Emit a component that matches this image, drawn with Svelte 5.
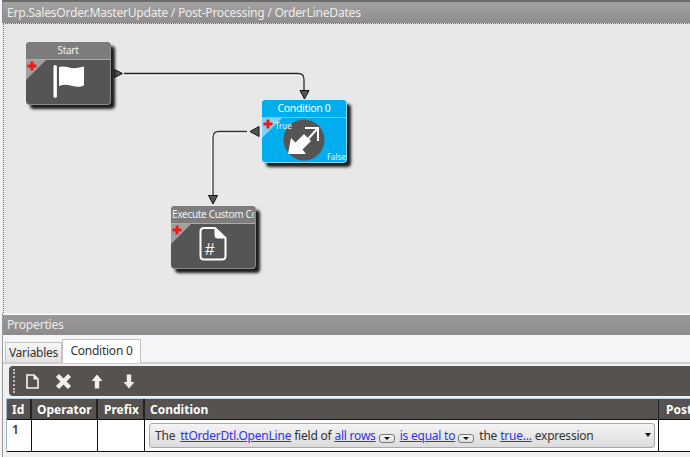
<script>
  const nodes = [
    { id: 'start', title: 'Start', x: 26, y: 19, kind: 'flag' },
    { id: 'cond', title: 'Condition 0', x: 262, y: 77, kind: 'cond' },
    { id: 'exec', title: 'Execute Custom Code', x: 171, y: 183, kind: 'code' }
  ];
  const cols = ['Id', 'Operator', 'Prefix', 'Condition', 'Post'];
</script>

<div class="app">
  <header class="title">Erp.SalesOrder.MasterUpdate / Post-Processing / OrderLineDates</header>

  <section class="canvas">
    <svg class="wires" width="690" height="290" viewBox="0 0 690 290">
      <g fill="none">
        <path d="M124 50.5H298Q304 50.5 304 56.5V68" stroke="#fff" stroke-width="2" transform="translate(0 1)"/>
        <path d="M124 50.5H298Q304 50.5 304 56.5V68" stroke="#222" stroke-width="1.3"/>
        <path d="M247 108.5H219Q213 108.5 213 114.5V172" stroke="#fff" stroke-width="2" transform="translate(-1 1)"/>
        <path d="M247 108.5H219Q213 108.5 213 114.5V172" stroke="#333" stroke-width="1.3"/>
      </g>
      <g fill="#555" stroke="#111" stroke-width="1">
        <path d="M114.5 46.5L122.5 50.5L114.5 54.5Z"/>
        <path d="M300 67.5H309L304.5 76Z"/>
        <path d="M259 103.5V113.5L250 108.5Z"/>
        <path d="M208.5 172.5H217.5L213 181Z"/>
      </g>
    </svg>

    {#each nodes as n (n.id)}
      <div class="node {n.id}" style="left:{n.x}px;top:{n.y}px">
        <div class="node-title"><span>{n.title}</span></div>
        <div class="node-body">
          <svg class="corner" width="22" height="22" viewBox="0 0 22 22">
            <path d="M0 0H20L0 20Z" class="tri"/>
            <path d="M3.5 0.5h3v3h3v3h-3v3h-3v-3h-3v-3h3z" transform="translate(1 1)" fill="#f01818"/>
          </svg>
          {#if n.kind === 'flag'}
            <svg class="icon" width="36" height="36" viewBox="0 0 36 36">
              <rect x="1.5" y="1" width="3.4" height="33" rx="1.7" fill="#fff"/>
              <path d="M7 3C13 1 18 5 24 4C27 3.5 30 3 32 2.5V21.5C26 24 21 22 16 21C13 20.5 10 21 7 22Z" fill="#fff"/>
            </svg>
          {:else if n.kind === 'cond'}
            <span class="true">True</span>
            <span class="false">False</span>
            <svg class="icon round" width="42" height="42" viewBox="0 0 42 42">
              <circle cx="21" cy="21" r="20.5" fill="#555"/>
              <path d="M5 35L8 19L12.5 23.5L21 15L28 22L19.5 30.5L23 35Z" fill="#fff"/>
              <path d="M22 9H35V22M34.5 9.5L20.5 25" fill="none" stroke="#fff" stroke-width="2"/>
            </svg>
          {:else}
            <svg class="icon" width="28" height="34" viewBox="0 0 28 34">
              <path d="M5 1H16L26.5 11V29Q26.5 32.5 23 32.5H5Q1.5 32.5 1.5 29V4.5Q1.5 1 5 1Z" fill="none" stroke="#fff" stroke-width="2"/>
              <path d="M15.5 1V8Q15.5 11.5 19 11.5H26.5Z" fill="#fff"/>
              <text x="6" y="27.5" class="hash">#</text>
            </svg>
          {/if}
        </div>
      </div>
    {/each}
  </section>

  <section class="props">
    <div class="props-title">Properties</div>
    <div class="tabs">
      <div class="tab">Variables</div>
      <div class="tab active">Condition 0</div>
    </div>
    <div class="content">
      <div class="toolbar">
        <span class="grip"></span>
        <svg width="13" height="15" viewBox="0 0 13 15" class="tb first">
          <path d="M1 1H8L12 5V14H1Z" fill="none" stroke="#f4f4f4" stroke-width="1.6"/>
          <path d="M7.5 1V5.5H12Z" fill="#f4f4f4"/>
        </svg>
        <svg width="17" height="15" viewBox="0 0 17 15" class="tb">
          <path d="M2.5 1.5L14.5 13.5M14.5 1.5L2.5 13.5" stroke="#f0f0f0" stroke-width="4.4"/>
        </svg>
        <svg width="12" height="15" viewBox="0 0 12 15" class="tb">
          <path d="M6 0.5L11.5 7H8.2V14.5H3.8V7H0.5Z" fill="#efefef"/>
        </svg>
        <svg width="12" height="15" viewBox="0 0 12 15" class="tb last">
          <path d="M6 14.5L11.5 8H8.2V0.5H3.8V8H0.5Z" fill="#efefef"/>
        </svg>
      </div>
      <div class="grid">
        {#each cols as c}
          <div class="th">{c}</div>
        {/each}
        <div class="td id">1</div>
        <div class="td"></div>
        <div class="td"></div>
        <div class="td cond">
          <div class="combo">
            <span class="the">The</span>
            <a href="#a">ttOrderDtl.OpenLine</a>
            <span>field of</span>
            <a href="#a">all rows</a><span class="mini"></span>
            <a href="#a">is equal to</a><span class="mini"></span>
            <span>the</span>
            <a href="#a">true...</a>
            <span>expression</span>
            <span class="caret"></span>
          </div>
        </div>
        <div class="td"></div>
      </div>
    </div>
  </section>
</div>

<style>
  :global(body) { margin: 0; background: #f1f1f3; }
  .app {
    width: 690px; height: 457px; overflow: hidden;
    display: flex; flex-direction: column;
    font-family: "Noto Sans", "Open Sans", sans-serif;
    background: #f1f1f3;
    border-left: 2px solid #f4f4f6;
    box-sizing: border-box;
  }
  .title {
    height: 21px; flex: none;
    border-top: 2px solid #6b6b6b;
    border-left: 1px solid #8c8c8c;
    padding-left: 4px;
    background: linear-gradient(#a3a1a1, #8f8d8d);
    color: #ececec; font-size: 12.2px; line-height: 22px;
    white-space: nowrap; letter-spacing: -0.3px;
    box-sizing: content-box;
  }
  .canvas {
    position: relative; height: 290px; flex: none;
    background: #e8e8e8;
    border-top: 1px dotted #666;
    border-left: 1px dotted #777;
    box-sizing: border-box;
    margin-left: 1px;
  }
  .wires { position: absolute; left: -4px; top: -1px; }
  .node {
    position: absolute; width: 85px; height: 63px; margin-left: -4px; margin-top: -1px;
    border-radius: 4px; background: #555;
    box-shadow: 4px 4px 3px #1c1c1c;
    border: 1px solid #8a8a8a; border-top: 0; border-left: 0;
    box-sizing: border-box;
  }
  .node-title {
    height: 17px; background: #7d7d7d;
    border-bottom: 1px solid #aaa;
    border-radius: 4px 4px 0 0;
    color: #f2f2f2; font-size: 10px; line-height: 16px; text-align: center;
    white-space: nowrap; letter-spacing: -0.3px;
    padding: 0 1px; box-sizing: content-box;
  }
  .node-title span { display: block; overflow: hidden; }
  .exec .node-title { text-align: left; }
  .node-body { position: relative; height: 44px; }
  .corner { position: absolute; left: 0; top: 0; }
  .tri { fill: #a0a0a0; }
  .icon { position: absolute; left: 26px; top: 4px; }
  .exec .icon { left: 28px; top: 3px; }
  .node.cond { background: #00aeef; border-color: #8fd6f3; }
  .node.cond .node-title { background: #00aeef; border-bottom-color: #6cc9ee; color: #fff; font-size: 10.5px; letter-spacing: -0.35px; }
  .node.cond .tri { fill: #7fd4f5; }
  .node.cond .icon.round { left: 21px; top: 1px; }
  .true, .false { position: absolute; color: #f2f2f2; font-size: 8px; line-height: 10px; }
  .true { left: 13px; top: 3px; z-index: 1; }
  .false { right: 0; bottom: 0; }
  .hash { font: 17px "Liberation Sans", sans-serif; fill: #fff; }

  .props { flex: 1; display: flex; flex-direction: column; min-height: 0; border-left: 1px solid #999; }
  .props-title {
    height: 20px; flex: none; margin-top: 1px;
    border-top: 1px solid #f8f8f8;
    background: linear-gradient(#9a9898, #8d8b8b);
    color: #ececec; font-size: 12.2px; line-height: 20px; padding-left: 4px; letter-spacing: -0.25px;
  }
  .tabs {
    height: 29px; flex: none; display: flex; align-items: flex-end; padding-left: 2px;
    border-bottom: 2px solid #cfcfcf; background: #f5f5f8; box-sizing: border-box;
  }
  .tab {
    height: 20px; width: 57px; box-sizing: border-box; text-align: center;
    background: linear-gradient(#f6f6f6, #e2e2e2);
    border: 1px solid #c4c4c4; border-bottom: 0;
    font-size: 12px; line-height: 20px; color: #333; letter-spacing: -0.25px;
  }
  .tab.active {
    height: 24px; width: 79px; background: #fff; line-height: 21px;
    margin-bottom: -1px;
  }
  .content { flex: 1; display: flex; flex-direction: column; background: #f1f1f3; padding: 2px 0 0 3px; min-height: 0; }
  .toolbar {
    height: 30px; flex: none; margin-left: 3px;
    background: #55524f; border-radius: 4px 0 0 4px;
    display: flex; align-items: center; gap: 19px; padding-left: 4px;
    box-sizing: border-box;
  }
  .grip { height: 24px; border-left: 2px dotted #bbb; margin-right: -8px; }
  .tb { flex: none; }
  .first { margin-right: -3px; }
  .last { margin-left: 1px; }
  .grid {
    margin-top: 2px;
    display: grid;
    grid-template-columns: 25px 66px 47px 514px 1fr;
    grid-template-rows: 21px 32px;
    border-top: 1px solid #b9cfe0; border-left: 1px solid #9fb7cc;
    background: #fff;
  }
  .th {
    background: #55524f; color: #fff; font-size: 12px; font-weight: 700;
    line-height: 21px; padding-left: 5px; border-right: 2px solid #222; border-bottom: 1px solid #111;
    white-space: nowrap; overflow: hidden; box-sizing: border-box;
  }
  .th:nth-child(3) { padding-left: 6px; }
  .th:nth-child(4) { border-right-width: 1px; }
  .th:nth-child(5) { border-right: 0; padding-left: 7px; }
  .td {
    background: #fff; border-right: 1px solid #111; border-bottom: 1px solid #111;
    box-sizing: border-box; font-size: 12px; color: #333;
  }
  .td:last-child { border-right: 0; }
  .id { padding: 1px 0 0 5px; font-weight: 600; }
  .td.cond { padding: 3px 3px 2px 4px; }
  .combo {
    height: 25px; box-sizing: border-box; position: relative;
    border: 1px solid #a8a8a8; border-radius: 3px;
    background: linear-gradient(#f3f3f3, #dcdcdc);
    display: flex; align-items: center; gap: 3px; padding-left: 5px;
    font-size: 12px; color: #333; white-space: nowrap; letter-spacing: -0.22px;
  }
  .the { margin-right: 2px; }
  a { color: #3333ee; text-decoration: underline; }
  .mini {
    width: 14px; height: 7px; margin-right: 2px; margin-top: 5px; border: 1px solid #777; border-radius: 3px;
    background: linear-gradient(#fafafa, #ddd); position: relative;
  }
  .mini::after {
    content: ""; position: absolute; left: 4px; top: 2px;
    border: 3px solid transparent; border-top: 3px solid #111; border-bottom: 0;
  }
  .caret {
    position: absolute; right: 3.5px; top: 9px;
    border: 3.5px solid transparent; border-top: 4px solid #111; border-bottom: 0;
  }
</style>
